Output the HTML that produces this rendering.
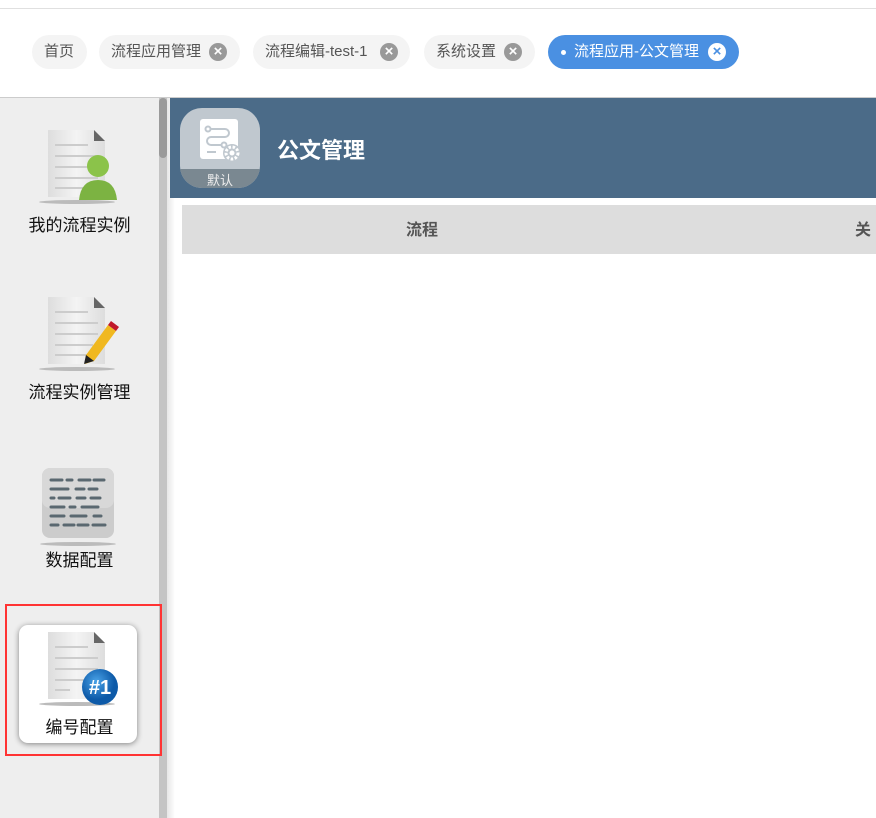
<!DOCTYPE html>
<html><head><meta charset="utf-8"><style>
*{margin:0;padding:0;box-sizing:border-box}
body{width:876px;height:818px;overflow:hidden;background:#fff;font-family:"Liberation Sans","Noto Sans CJK SC",sans-serif;position:relative}
.topline{position:absolute;left:0;top:8px;width:876px;height:1px;background:#e0e0e0}
.tab{position:absolute;top:35px;height:34px;border-radius:17px;background:#f4f4f4;color:#555;font-size:15px;line-height:34px;padding-left:12px;white-space:nowrap}
.x{position:absolute;top:8px;width:18px;height:18px;border-radius:50%;background:#999;color:#fff;font-size:15px;line-height:18px;text-align:center;font-weight:bold}
.sep{position:absolute;left:0;top:97px;width:876px;height:1px;background:#ccc}
.side{position:absolute;left:0;top:98px;width:159px;height:720px;background:#eee}
.sb{position:absolute;left:159px;top:98px;width:8px;height:720px;background:#c4c4c4}
.thumb{position:absolute;left:159px;top:98px;width:8px;height:60px;background:#9a9a9a;border-radius:4px}
.shadow{position:absolute;left:167px;top:98px;width:8px;height:720px;background:linear-gradient(to right,#e6e6e6,#fff)}
.hdr{position:absolute;left:170px;top:98px;width:706px;height:100px;background:#4b6b88}
.ico{position:absolute;left:180px;top:108px;width:80px;height:80px;border-radius:22px;background:#c0c8cf;overflow:hidden}
.title{position:absolute;left:277px;top:133px;color:#fff;font-size:22px;font-weight:bold}
.th{position:absolute;left:182px;top:205px;width:694px;height:49px;background:#ddd;color:#555;font-weight:bold;font-size:16px;line-height:52px}
.lbl{position:absolute;width:159px;left:0;text-align:center;font-size:17px;color:#111;z-index:3}
</style></head><body>
<div class="topline"></div>
<div class="tab" style="left:32px;width:55px">首页</div>
<div class="tab" style="left:99px;width:141px">流程应用管理<span class="x" style="left:110px">×</span></div>
<div class="tab" style="left:253px;width:157px">流程编辑-test-1<span class="x" style="left:127px">×</span></div>
<div class="tab" style="left:424px;width:111px">系统设置<span class="x" style="left:80px">×</span></div>
<div class="tab" style="left:548px;width:191px;background:#4a90e2;color:#fff;padding-left:26px"><span style="position:absolute;left:13px;top:15px;width:5px;height:5px;border-radius:50%;background:#fff"></span>流程应用-公文管理<span class="x" style="left:160px;background:#fff;color:#4a90e2">×</span></div>
<div class="sep"></div>
<div class="side"></div>
<div class="sb"></div><div class="thumb"></div><div class="shadow"></div>

<svg style="position:absolute;left:0;top:98px;z-index:2" width="170" height="720">
<defs><linearGradient id="pg" x1="0" y1="0" x2="1" y2="0"><stop offset="0" stop-color="#ddd"/><stop offset=".5" stop-color="#f4f4f4"/><stop offset="1" stop-color="#ddd"/></linearGradient>
<radialGradient id="bl" cx=".4" cy=".35"><stop offset="0" stop-color="#4aa3e8"/><stop offset="1" stop-color="#0d5aa8"/></radialGradient></defs>
<g transform="translate(48,32)"><path d="M0,0h46l11,11v56h-57z" fill="url(#pg)"/><path d="M46,0l11,11h-11z" fill="#666"/>
<g stroke="#ccc" stroke-width="2"><line x1="7" y1="15" x2="40" y2="15"/><line x1="7" y1="26" x2="50" y2="26"/><line x1="7" y1="37" x2="50" y2="37"/><line x1="7" y1="48" x2="50" y2="48"/><line x1="7" y1="58" x2="40" y2="58"/></g>
<ellipse cx="29" cy="72" rx="38" ry="2" fill="#bbb"/></g>
<circle cx="98" cy="68" r="11" fill="#8bc34a"/><path d="M79,102q2,-20 19,-20q17,0 19,20z" fill="#7cb342"/>
<g transform="translate(48,199)"><path d="M0,0h46l11,11v56h-57z" fill="url(#pg)"/><path d="M46,0l11,11h-11z" fill="#666"/>
<g stroke="#ccc" stroke-width="2"><line x1="7" y1="15" x2="40" y2="15"/><line x1="7" y1="26" x2="50" y2="26"/><line x1="7" y1="37" x2="50" y2="37"/><line x1="7" y1="48" x2="45" y2="48"/><line x1="7" y1="58" x2="40" y2="58"/></g>
<ellipse cx="29" cy="72" rx="38" ry="2" fill="#bbb"/>
<path d="M60,28l8,6l-22,30l-9,3l1,-9z" fill="#f0b820"/><path d="M60,28l3,-4l8,6l-3,4z" fill="#c0182a"/><path d="M38,58l8,6l-10,3z" fill="#222"/></g>
<g transform="translate(42,370)"><rect width="72" height="70" rx="8" fill="#ccc"/><rect width="72" height="40" rx="8" fill="#d8d8d8"/>
<g stroke="#5a6870" stroke-width="3" stroke-linecap="round">
<line x1="9" y1="12" x2="20" y2="12"/><line x1="25" y1="12" x2="30" y2="12"/><line x1="37" y1="12" x2="48" y2="12"/><line x1="52" y1="12" x2="62" y2="12"/>
<line x1="9" y1="21" x2="26" y2="21"/><line x1="34" y1="21" x2="42" y2="21"/><line x1="47" y1="21" x2="55" y2="21"/>
<line x1="9" y1="30" x2="12" y2="30"/><line x1="17" y1="30" x2="28" y2="30"/><line x1="35" y1="30" x2="43" y2="30"/><line x1="49" y1="30" x2="58" y2="30"/>
<line x1="9" y1="39" x2="22" y2="39"/><line x1="28" y1="39" x2="33" y2="39"/><line x1="40" y1="39" x2="56" y2="39"/>
<line x1="9" y1="48" x2="22" y2="48"/><line x1="29" y1="48" x2="44" y2="48"/><line x1="52" y1="48" x2="59" y2="48"/>
<line x1="9" y1="57" x2="16" y2="57"/><line x1="22" y1="57" x2="32" y2="57"/><line x1="36" y1="57" x2="46" y2="57"/><line x1="51" y1="57" x2="63" y2="57"/></g>
<ellipse cx="36" cy="76" rx="38" ry="2" fill="#bbb"/></g>
<rect x="6" y="507" width="155" height="150" fill="none" stroke="#f33" stroke-width="2"/>
<rect x="19" y="527" width="118" height="118" rx="9" fill="#fff" style="filter:drop-shadow(0 1px 3px rgba(0,0,0,.45))"/>
<g transform="translate(48,534)"><path d="M0,0h46l11,11v56h-57z" fill="url(#pg)"/><path d="M46,0l11,11h-11z" fill="#666"/>
<g stroke="#ccc" stroke-width="2"><line x1="7" y1="15" x2="40" y2="15"/><line x1="7" y1="26" x2="50" y2="26"/><line x1="7" y1="37" x2="50" y2="37"/><line x1="7" y1="48" x2="40" y2="48"/><line x1="7" y1="58" x2="22" y2="58"/></g>
<ellipse cx="29" cy="72" rx="38" ry="2" fill="#bbb"/>
<circle cx="52" cy="55" r="18" fill="url(#bl)"/><text x="52" y="62" fill="#fff" font-size="20" font-weight="bold" text-anchor="middle" font-family="Liberation Sans">#1</text></g>
</svg>
<div class="lbl" style="top:211px">我的流程实例</div>
<div class="lbl" style="top:378px">流程实例管理</div>
<div class="lbl" style="top:546px">数据配置</div>
<div class="lbl" style="top:713px">编号配置</div>

<div class="hdr"></div>
<div class="ico">
<svg width="80" height="80"><rect x="20" y="11" width="38" height="40" rx="3" fill="#fff"/>
<g stroke="#c0c8cf" stroke-width="2" fill="none"><circle cx="28" cy="21" r="2.5"/><path d="M31,21h14a4,4 0 0 1 0,8h-14a4,4 0 0 0 0,8h10"/><circle cx="44" cy="37" r="2.5"/><line x1="27" y1="44" x2="36" y2="44"/></g>
<circle cx="52" cy="45" r="9" fill="#c0c8cf"/><circle cx="52" cy="45" r="6" fill="none" stroke="#fff" stroke-width="3" stroke-dasharray="2.5 1.6"/><circle cx="52" cy="45" r="2.5" fill="#fff"/>
<rect x="0" y="61" width="80" height="19" fill="#7a8891"/>
<text x="40" y="77" fill="#eee" font-size="13" text-anchor="middle" font-family="Noto Sans CJK SC">默认</text></svg></div>
<div class="title">公文管理</div>
<div class="th"><span style="position:absolute;left:224px">流程</span><span style="position:absolute;left:673px">关</span></div>
</body></html>
